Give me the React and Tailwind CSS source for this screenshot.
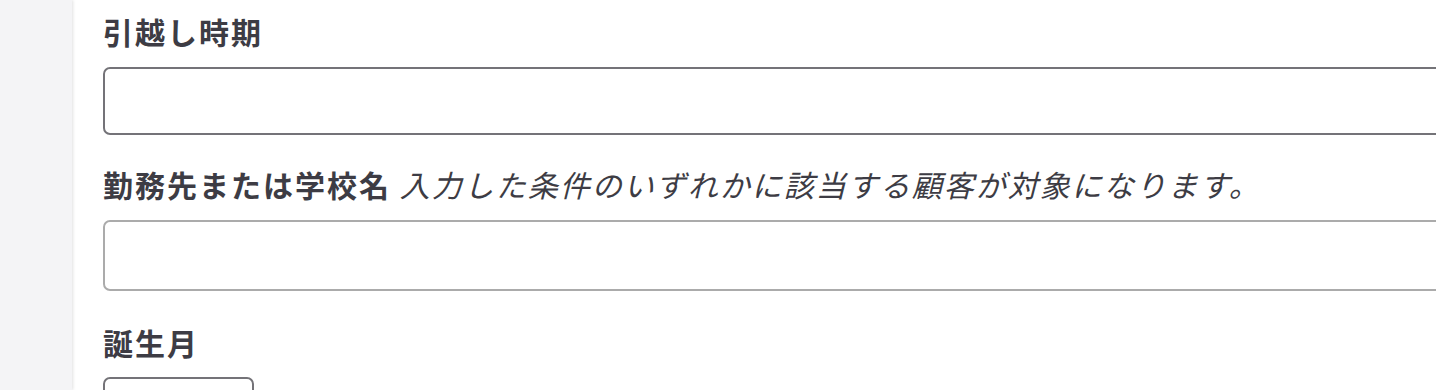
export default function App() {
  const font = { fontFamily: '"Noto Sans CJK JP", "Noto Sans", sans-serif' };
  return (
    <div className="flex h-[390px] w-[1436px] overflow-hidden bg-white text-[#3d3c44]" style={font}>
      <aside className="w-[72px] shrink-0 bg-[#f4f4f6] shadow-[1px_0_3px_rgba(0,0,0,0.12)]" />
      <main className="flex-1 pl-[31px] pt-[11px]">
        <div className="flex flex-col">
          <label className="h-[40px] text-[30px] leading-[40px] font-bold tracking-[2px]">引越し時期</label>
          <div className="mt-[16px] h-[68px] w-[1400px] rounded-[7px] border-2 border-[#747378] bg-white" />

          <label className="mt-[29px] h-[40px] text-[30px] leading-[40px] tracking-[2px] whitespace-nowrap">
            <span className="font-bold">勤務先または学校名</span>{' '}
            <span className="italic font-normal">入力した条件のいずれかに該当する顧客が対象になります。</span>
          </label>
          <div className="mt-[16px] h-[71px] w-[1400px] rounded-[7px] border-2 border-[#ababab] bg-white" />

          <label className="mt-[31px] h-[40px] text-[30px] leading-[40px] font-bold tracking-[2px]">誕生月</label>
          <div className="mt-[15px] h-[60px] w-[151px] shrink-0 rounded-[7px] border-2 border-[#747378] bg-white" />
        </div>
      </main>
    </div>
  );
}
